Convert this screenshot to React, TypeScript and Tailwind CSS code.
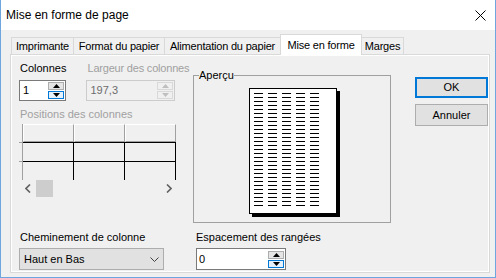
import React from "react";

const font = { fontFamily: '"Liberation Sans", Arial, sans-serif' };

function Spin({ disabled }: { disabled?: boolean }) {
  const b = disabled ? "border-[#d9d9d9] bg-[#f0f0f0]" : "border-[#adadad] bg-[#e5e5e5]";
  const t = disabled ? "#bfbfbf" : "#000";
  return (
    <div className="flex flex-col gap-[1px] pr-[1px]">
      {[0, 1].map((i) => (
        <div
          key={i}
          className={`w-[16px] h-[8px] border flex items-center justify-center ${
            i === 1 && !disabled ? "border-[#0078d7] bg-[#e5f1fb]" : b
          }`}
        >
          <svg width="7" height="4" viewBox="0 0 7 4">
            {i === 0 ? <path d="M0 4 L3.5 0 L7 4 Z" fill={t} /> : <path d="M0 0 L3.5 4 L7 0 Z" fill={t} />}
          </svg>
        </div>
      ))}
    </div>
  );
}

function Dashes() {
  const rows = Array.from({ length: 29 });
  return (
    <div className="flex flex-col gap-[3px] pt-[4px] pl-[4px]">
      {rows.map((_, r) => (
        <div key={r} className="flex gap-[5px]">
          {[0, 1, 2, 3, 4].map((c) => (
            <div key={c} className="w-[9px] h-[1px] bg-black" />
          ))}
        </div>
      ))}
    </div>
  );
}

const tabs = [
  { t: "Imprimante", w: "w-[62px]" },
  { t: "Format du papier", w: "w-[91px]" },
  { t: "Alimentation du papier", w: "w-[116px]" },
];

export default function App() {
  return (
    <div
      className="w-[496px] h-[278px] flex flex-col border-x border-b border-[#6ea6e0] bg-[#f0f0f0] text-[11px] text-black overflow-hidden"
      style={font}
    >
      {/* title bar */}
      <div className="h-[30px] bg-white flex items-center justify-between pl-[5px] pr-[9px] shrink-0">
        <span className="text-[12px]">Mise en forme de page</span>
        <svg width="11" height="11" viewBox="0 0 11 11">
          <path d="M0.5 0.5 L10.5 10.5 M10.5 0.5 L0.5 10.5" stroke="#000" strokeWidth="1" />
        </svg>
      </div>

      <div className="flex flex-col pl-[9px] pr-[6px] pt-[4px]">
        {/* tabs */}
        <div className="flex items-end h-[20px] pl-[1px] tracking-[-0.2px] whitespace-nowrap">
          {tabs.map(({ t, w }) => (
            <div
              key={t}
              className={`${w} h-[17px] border-t border-l border-[#d9d9d9] last:border-r flex items-center justify-center bg-[#f0f0f0]`}
            >
              {t}
            </div>
          ))}
          <div className="w-[82px] h-[21px] border-x border-t border-[#d9d9d9] bg-white flex items-start justify-center pt-[2px] -mb-[1px] relative z-10">
            Mise en forme
          </div>
          <div className="w-[42px] h-[17px] border-t border-r border-[#d9d9d9] flex items-center justify-center">Marges</div>
        </div>

        {/* panel */}
        <div className="h-[219px] w-[480px] border border-[#d9d9d9] bg-white p-[1px]">
          <div className="h-full w-full bg-[#f0f0f0] flex pl-[7px] pt-[6px]">
            <div className="flex flex-col w-[373px]">
              <div className="flex">
                {/* left column */}
                <div className="flex flex-col w-[158px]">
                  <div className="flex gap-[20px]">
                    <div className="flex flex-col">
                      <span className="h-[13px] leading-[13px] pl-[1px]">Colonnes</span>
                      <div className="mt-[5px] w-[47px] h-[21px] border border-[#7a7a7a] bg-white flex items-center justify-between pl-[3px]">
                        <span>1</span>
                        <Spin />
                      </div>
                    </div>
                    <div className="flex flex-col">
                      <span className="h-[13px] leading-[13px] pl-[1px] text-[#a0a0a0] whitespace-nowrap tracking-[-0.2px]">
                        Largeur des colonnes
                      </span>
                      <div className="mt-[5px] w-[89px] h-[21px] border border-[#cccccc] bg-[#f0f0f0] flex items-center justify-between pl-[3px] text-[#6d6d6d]">
                        <span>197,3</span>
                        <Spin disabled />
                      </div>
                    </div>
                  </div>
                  <span className="mt-[7px] h-[13px] leading-[13px] pl-[1px] text-[#a0a0a0] whitespace-nowrap">
                    Positions des colonnes
                  </span>
                  {/* grid */}
                  <div className="mt-[3px] w-[158px] flex">
                    <div className="w-[4px] flex flex-col">
                      <div className="h-[18px] border-r border-[#a0a0a0] bg-[#f0f0f0]" />
                      <div className="h-[19px] border-r border-t border-[#a0a0a0] bg-[#f0f0f0]" />
                      <div className="h-[19px] border-r border-t border-[#a0a0a0] bg-[#f0f0f0]" />
                    </div>
                    {[0, 1, 2].map((c) => (
                      <div key={c} className="w-[51px] flex flex-col">
                        <div className="h-[18px] border-t border-l border-white border-r-[#a0a0a0] border-r border-b border-b-[#a0a0a0] bg-[#f0f0f0]" />
                        <div className="h-[19px] border-t border-r border-black" />
                        <div className="h-[19px] border-t border-r border-black" />
                      </div>
                    ))}
                  </div>
                  {/* scrollbar */}
                  <div className="h-[17px] w-[158px] flex items-center justify-between">
                    <div className="flex items-center h-full">
                      <div className="w-[17px] h-full flex items-center justify-center">
                        <svg width="6" height="9" viewBox="0 0 6 9">
                          <path d="M5 0.5 L1 4.5 L5 8.5" stroke="#606060" strokeWidth="1.6" fill="none" />
                        </svg>
                      </div>
                      <div className="w-[17px] h-full bg-[#cdcdcd]" />
                    </div>
                    <div className="w-[17px] h-full flex items-center justify-center">
                      <svg width="6" height="9" viewBox="0 0 6 9">
                        <path d="M1 0.5 L5 4.5 L1 8.5" stroke="#606060" strokeWidth="1.6" fill="none" />
                      </svg>
                    </div>
                  </div>
                </div>

                {/* preview group */}
                <fieldset className="ml-[16px] mt-[8px] w-[198px] h-[153px] border border-[#a0a0a0] flex justify-center px-0">
                  <legend className="ml-[5px] px-0 leading-[11px] h-[11px]">Aperçu</legend>
                  <div className="mt-[7px] w-[88px] h-[126px] border border-black bg-white shadow-[3px_3px_0_0_#000] ml-[1px]">
                    <Dashes />
                  </div>
                </fieldset>
              </div>

              {/* bottom row */}
              <div className="flex mt-[8px]">
                <div className="flex flex-col w-[177px]">
                  <span className="h-[13px] leading-[13px] pl-[1px]">Cheminement de colonne</span>
                  <div className="mt-[4px] w-[145px] h-[22px] border border-[#adadad] bg-[#e1e1e1] flex items-center justify-between pl-[4px] pr-[4px]">
                    <span>Haut en Bas</span>
                    <svg width="9" height="5" viewBox="0 0 9 5">
                      <path d="M0.5 0.5 L4.5 4.5 L8.5 0.5" stroke="#404040" strokeWidth="1" fill="none" />
                    </svg>
                  </div>
                </div>
                <div className="flex flex-col">
                  <span className="h-[13px] leading-[13px]">Espacement des rangées</span>
                  <div className="mt-[4px] w-[90px] h-[22px] border border-[#7a7a7a] bg-white flex items-center justify-between pl-[2px]">
                    <span>0</span>
                    <Spin />
                  </div>
                </div>
              </div>
            </div>

            {/* buttons */}
            <div className="ml-[24px] mt-[15px] flex flex-col gap-[6px]">
              <div className="w-[73px] h-[21px] border-2 border-[#0078d7] bg-[#e1e1e1] flex items-center justify-center">
                OK
              </div>
              <div className="w-[73px] h-[22px] border border-[#adadad] bg-[#e1e1e1] flex items-center justify-center">
                Annuler
              </div>
            </div>
          </div>
        </div>
      </div>
    </div>
  );
}
